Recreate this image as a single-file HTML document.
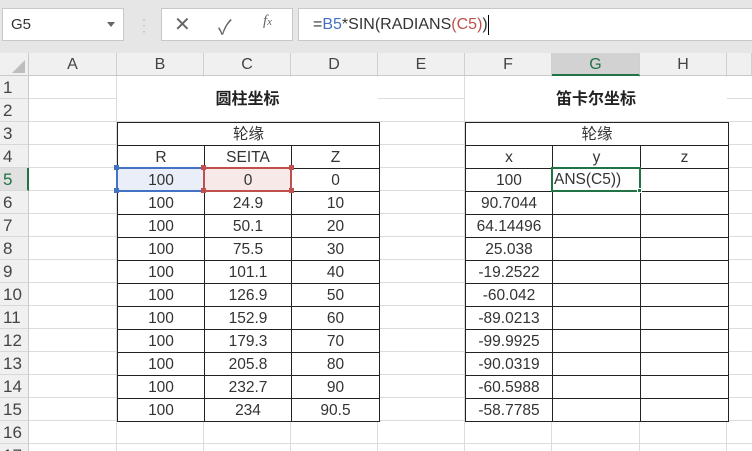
<!DOCTYPE html>
<html><head><meta charset="utf-8"><style>
*{margin:0;padding:0;box-sizing:border-box}
html,body{width:752px;height:451px;overflow:hidden}
body{background:#fff;position:relative;font-family:"Liberation Sans","Noto Sans CJK SC",sans-serif;color:#222}
.a{position:absolute}
.tb{left:0;top:0;width:752px;height:53px;background:#e6e6e6}
.box{background:#fff;border:1px solid #c8c8c8}
.ch{top:53px;height:23px;background:#f0f0f0;border-right:1px solid #d0d0d0;border-bottom:1px solid #c8c8c8;font-size:16px;text-align:center;line-height:23px;color:#444}
.rh{left:0;width:29px;height:23px;background:#f0f0f0;border-bottom:1px solid #d8d8d8;border-right:1px solid #c8c8c8;font-size:17px;line-height:23px;padding-left:3px;color:#444}
.vl{width:1px;top:76px;height:375px;background:#dcdcdc}
.hl{height:1px;left:29px;width:723px;background:#dcdcdc}
table{position:absolute;border-collapse:collapse;font-size:15.5px;table-layout:fixed;background:#fff}
td{border:1px solid #222;height:23px;text-align:center;padding:0;line-height:21px;color:#333;background:#fff}
.t{font-size:16px;font-weight:bold;text-align:center;line-height:46px;background:#fff}
</style></head><body>
<div class="a tb"></div>
<div class="a box" style="left:2px;top:8px;width:122px;height:33px;font-size:15px;line-height:31px;padding-left:8px;color:#333">G5</div>
<div class="a" style="left:107px;top:22px;width:0;height:0;border-left:4px solid transparent;border-right:4px solid transparent;border-top:5px solid #666"></div>
<div class="a" style="left:142px;top:16px;color:#aaa;font-size:12px;line-height:6px">·<br>·<br>·</div>
<div class="a box" style="left:161px;top:8px;width:132px;height:33px"></div>
<div class="a" style="left:174px;top:12px;font-size:20px;color:#666">✕</div>
<div class="a" style="left:218px;top:11px;font-size:20px;color:#666">✓</div>
<div class="a" style="left:263px;top:13px;font-size:15px;color:#666;font-family:'Liberation Serif',serif;font-style:italic">f<span style="font-size:11px">x</span></div>
<div class="a box" style="left:298px;top:8px;width:460px;height:33px;font-size:16px;line-height:31px;padding-left:14px;color:#333">=<span style="color:#4472c4">B5</span>*SIN(RADIANS<span style="color:#c0504d">(C5)</span>)<span style="display:inline-block;width:1px;height:20px;background:#000;vertical-align:middle"></span></div>

<div class="a" style="left:0;top:53px;width:29px;height:23px;background:#f0f0f0;border-right:1px solid #c8c8c8;border-bottom:1px solid #c8c8c8"></div>
<div class="a" style="left:12px;top:60px;width:0;height:0;border-left:13px solid transparent;border-bottom:13px solid #bdbdbd"></div>
<div class="a ch" style="left:29px;width:88px">A</div>
<div class="a ch" style="left:117px;width:87px">B</div>
<div class="a ch" style="left:204px;width:87px">C</div>
<div class="a ch" style="left:291px;width:87px">D</div>
<div class="a ch" style="left:378px;width:87px">E</div>
<div class="a ch" style="left:465px;width:87px">F</div>
<div class="a ch" style="left:552px;width:88px;background:#d2d2d2;border-bottom:2px solid #217346;color:#217346">G</div>
<div class="a ch" style="left:640px;width:87px">H</div>
<div class="a ch" style="left:727px;width:25px"></div>

<div class="a vl" style="left:116px"></div><div class="a vl" style="left:203px"></div><div class="a vl" style="left:290px"></div><div class="a vl" style="left:377px"></div><div class="a vl" style="left:464px"></div><div class="a vl" style="left:551px"></div><div class="a vl" style="left:639px"></div><div class="a vl" style="left:726px"></div>
<div class="a hl" style="top:98px"></div><div class="a hl" style="top:121px"></div><div class="a hl" style="top:144px"></div><div class="a hl" style="top:167px"></div><div class="a hl" style="top:190px"></div><div class="a hl" style="top:213px"></div><div class="a hl" style="top:236px"></div><div class="a hl" style="top:259px"></div><div class="a hl" style="top:282px"></div><div class="a hl" style="top:305px"></div><div class="a hl" style="top:328px"></div><div class="a hl" style="top:351px"></div><div class="a hl" style="top:374px"></div><div class="a hl" style="top:397px"></div><div class="a hl" style="top:420px"></div><div class="a hl" style="top:443px"></div>

<div class="a rh" style="top:76px">1</div><div class="a rh" style="top:99px">2</div><div class="a rh" style="top:122px">3</div><div class="a rh" style="top:145px">4</div>
<div class="a rh" style="top:168px;background:#e1e1e1;border-right:2px solid #217346;color:#217346">5</div>
<div class="a rh" style="top:191px">6</div><div class="a rh" style="top:214px">7</div><div class="a rh" style="top:237px">8</div><div class="a rh" style="top:260px">9</div><div class="a rh" style="top:283px">10</div><div class="a rh" style="top:306px">11</div><div class="a rh" style="top:329px">12</div><div class="a rh" style="top:352px">13</div><div class="a rh" style="top:375px">14</div><div class="a rh" style="top:398px">15</div><div class="a rh" style="top:421px">16</div><div class="a rh" style="top:444px">17</div>

<div class="a t" style="left:117px;top:77px;width:261px;height:44px">圆柱坐标</div>
<div class="a t" style="left:465px;top:77px;width:262px;height:44px">笛卡尔坐标</div>

<table style="left:117px;top:122px;width:262px">
<colgroup><col style="width:87px"><col style="width:87px"><col style="width:88px"></colgroup>
<tr><td colspan="3">轮缘</td></tr>
<tr><td>R</td><td>SEITA</td><td>Z</td></tr>
<tr><td style="background:#e9eef8">100</td><td style="background:#f8e9e9">0</td><td>0</td></tr>
<tr><td>100</td><td>24.9</td><td>10</td></tr>
<tr><td>100</td><td>50.1</td><td>20</td></tr>
<tr><td>100</td><td>75.5</td><td>30</td></tr>
<tr><td>100</td><td>101.1</td><td>40</td></tr>
<tr><td>100</td><td>126.9</td><td>50</td></tr>
<tr><td>100</td><td>152.9</td><td>60</td></tr>
<tr><td>100</td><td>179.3</td><td>70</td></tr>
<tr><td>100</td><td>205.8</td><td>80</td></tr>
<tr><td>100</td><td>232.7</td><td>90</td></tr>
<tr><td>100</td><td>234</td><td>90.5</td></tr>
</table>
<table style="left:465px;top:122px;width:263px">
<colgroup><col style="width:87px"><col style="width:88px"><col style="width:88px"></colgroup>
<tr><td colspan="3">轮缘</td></tr>
<tr><td>x</td><td>y</td><td>z</td></tr>
<tr><td>100</td><td></td><td></td></tr>
<tr><td>90.7044</td><td></td><td></td></tr>
<tr><td>64.14496</td><td></td><td></td></tr>
<tr><td>25.038</td><td></td><td></td></tr>
<tr><td>-19.2522</td><td></td><td></td></tr>
<tr><td>-60.042</td><td></td><td></td></tr>
<tr><td>-89.0213</td><td></td><td></td></tr>
<tr><td>-99.9925</td><td></td><td></td></tr>
<tr><td>-90.0319</td><td></td><td></td></tr>
<tr><td>-60.5988</td><td></td><td></td></tr>
<tr><td>-58.7785</td><td></td><td></td></tr>
</table>

<div class="a" style="left:116px;top:167px;width:89px;height:25px;border:2px solid #4472c4"></div>
<div class="a" style="left:114px;top:165px;width:5px;height:5px;background:#4472c4"></div>
<div class="a" style="left:114px;top:188px;width:5px;height:5px;background:#4472c4"></div>
<div class="a" style="left:203px;top:167px;width:89px;height:25px;border:2px solid #c0504d"></div>
<div class="a" style="left:201px;top:165px;width:5px;height:5px;background:#c0504d"></div>
<div class="a" style="left:201px;top:188px;width:5px;height:5px;background:#c0504d"></div>
<div class="a" style="left:289px;top:165px;width:5px;height:5px;background:#c0504d"></div>
<div class="a" style="left:289px;top:188px;width:5px;height:5px;background:#c0504d"></div>
<div class="a" style="left:551px;top:167px;width:90px;height:25px;border:2px solid #217346;background:#fff;font-size:15.5px;line-height:21px;padding-left:1px;color:#333;overflow:hidden;white-space:nowrap">ANS(C5))</div>
<div class="a" style="left:637px;top:188px;width:5px;height:5px;background:#217346;border:1px solid #fff"></div>
</body></html>
